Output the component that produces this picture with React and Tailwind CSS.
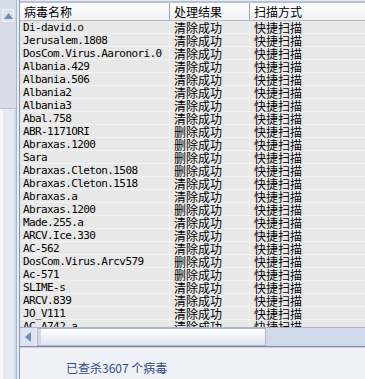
import React from "react";

const rows = [
  ["Di-david.o", "清除成功"],
  ["Jerusalem.1808", "清除成功"],
  ["DosCom.Virus.Aaronori.0", "清除成功"],
  ["Albania.429", "清除成功"],
  ["Albania.506", "清除成功"],
  ["Albania2", "清除成功"],
  ["Albania3", "清除成功"],
  ["Abal.758", "清除成功"],
  ["ABR-1171ORI", "删除成功"],
  ["Abraxas.1200", "删除成功"],
  ["Sara", "删除成功"],
  ["Abraxas.Cleton.1508", "删除成功"],
  ["Abraxas.Cleton.1518", "清除成功"],
  ["Abraxas.a", "清除成功"],
  ["Abraxas.1200", "删除成功"],
  ["Made.255.a", "清除成功"],
  ["ARCV.Ice.330", "清除成功"],
  ["AC-562", "清除成功"],
  ["DosCom.Virus.Arcv579", "删除成功"],
  ["Ac-571", "删除成功"],
  ["SLIME-s", "清除成功"],
  ["ARCV.839", "清除成功"],
  ["JO_V111", "清除成功"],
  ["AC-A742.a", "清除成功"],
];

const cjk = "font-['Noto_Sans_CJK_SC',sans-serif]";
const mono = "font-['DejaVu_Sans_Mono','Noto_Sans_CJK_SC',monospace]";

export default function App() {
  return (
    <div className="w-[365px] h-[379px] flex bg-[#f0f1f6] overflow-hidden">
      {/* left vertical scrollbar strip */}
      <div className="w-[16px] h-full flex flex-col bg-[#d6dde9]">
        <div className="h-[9px]" />
        <div className="mx-[2px] h-[13px] border border-[#eef2f8] bg-[#dbe2ee] flex items-center justify-center">
          <svg width="9" height="6" viewBox="0 0 9 6">
            <polygon points="0,6 9,6 4.5,0" fill="#6f8dbf" />
          </svg>
        </div>
        <div className="h-[86px]" />
        <div className="flex-1 border-t border-[#b9c4d8] bg-[#e4e9f2] flex">
          <div className="w-[3px] bg-[#f5f7fb]" />
          <div className="flex-1" />
          <div className="w-[2px] bg-[#cfd7e6]" />
        </div>
      </div>
      <div className="w-[1px] h-full bg-[#a9b5ca]" />
      <div className="w-[2px] h-full bg-[#e9edf4]" />
      <div className="w-[1px] h-full bg-[#8594ae]" />

      {/* main */}
      <div className="flex-1 flex flex-col min-w-0">
        <div className="h-[1px] bg-[#e3e7ee]" />
        <div className="h-[2px] bg-[#b6c2d7]" />
        {/* header */}
        <div className={`h-[18px] flex border-b border-[#b8b8b8] bg-gradient-to-b from-[#ffffff] to-[#eef0f3] text-[12px] leading-[17px] text-black ${cjk}`}>
          <div className="w-[150px] pl-[4px] border-r border-[#9ea6b3]">病毒名称</div>
          <div className="w-[80px] pl-[4px] border-r border-[#9ea6b3]">处理结果</div>
          <div className="flex-1 pl-[4px]">扫描方式</div>
        </div>
        {/* rows */}
        <div className="h-[306px] overflow-hidden bg-[#e8e8e8]">
          {rows.map(([name, res], i) => (
            <div key={i} className="h-[13px] flex shadow-[inset_0_-1px_0_#f3f3f3] text-black">
              <div className={`w-[150px] pl-[3px] shadow-[inset_-1px_0_0_#f3f3f3] text-[11px] leading-[13px] tracking-[-0.6px] whitespace-nowrap overflow-hidden ${mono}`}>
                {name}
              </div>
              <div className={`w-[80px] pl-[4px] shadow-[inset_-1px_0_0_#f3f3f3] text-[12px] leading-[13px] ${cjk}`}>{res}</div>
              <div className={`flex-1 pl-[4px] text-[12px] leading-[13px] ${cjk}`}>快捷扫描</div>
            </div>
          ))}
        </div>
        {/* horizontal scrollbar */}
        <div className="h-[19px] flex bg-[#cfd9ea] border-t border-[#a9b4c8]">
          <div className="w-[17px] flex items-center justify-center bg-[#dde4ef] border-r border-[#eef2f8]">
            <svg width="6" height="10" viewBox="0 0 6 10">
              <polygon points="6,0 6,10 0,5" fill="#6f8dbf" />
            </svg>
          </div>
          <div className="w-[229px] border border-[#aab4c6] bg-gradient-to-b from-[#ffffff] via-[#eef1f7] to-[#dfe5ef] flex">
            <div className="w-[3px] bg-[#d2d9e6]" />
          </div>
        </div>
        <div className="h-[1px] bg-[#7f8ba2]" />
        <div className="h-[1px] bg-[#c9d0dd]" />
        {/* bottom panel */}
        <div className={`flex-1 bg-[#f0f1f6] pl-[46px] pt-[13px] text-[12px] leading-[14px] text-[#2e4b86] ${cjk}`}>
          已查杀3607 个病毒
        </div>
      </div>
    </div>
  );
}
